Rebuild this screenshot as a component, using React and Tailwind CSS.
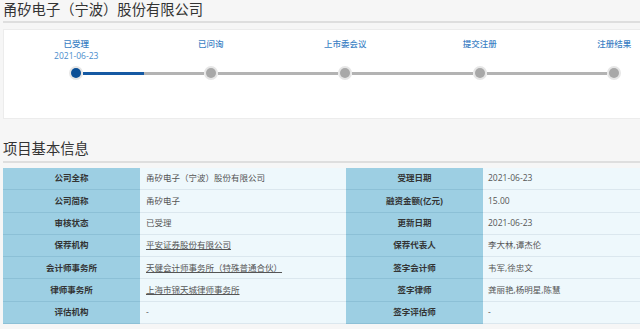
import React from 'react';

const steps = [
  { name: '已受理', date: '2021-06-23', done: true },
  { name: '已问询' },
  { name: '上市委会议' },
  { name: '提交注册' },
  { name: '注册结果' },
];

const rows = [
  ['公司全称', '甬矽电子（宁波）股份有限公司', '受理日期', '2021-06-23'],
  ['公司简称', '甬矽电子', '融资金额(亿元)', '15.00'],
  ['审核状态', '已受理', '更新日期', '2021-06-23'],
  ['保荐机构', '平安证券股份有限公司', '保荐代表人', '李大林,谭杰伦', true],
  ['会计师事务所', '天健会计师事务所（特殊普通合伙）', '签字会计师', '韦军,徐忠文', true],
  ['律师事务所', '上海市锦天城律师事务所', '签字律师', '龚丽艳,杨明星,陈慧', true],
  ['评估机构', '-', '签字评估师', '-'],
];

function Step({ step, index, last }) {
  return (
    <div className="w-[134.5px] shrink-0 flex flex-col items-center">
      <div className="h-[16px] flex items-end text-[8.5px] leading-none font-medium text-[#3b7fc4] whitespace-nowrap">
        {step.name}
      </div>
      <div className="mt-[2px] h-[12px] flex items-center text-[8.5px] leading-none text-[#4a8ccc]">
        {step.date || ''}
      </div>
      <div className="mt-[4px] w-full flex items-center h-[14px]">
        <div className={`flex-1 h-[3px] ${index === 0 ? 'bg-transparent' : 'bg-[#b3b3b3]'}`} />
        <div className="w-[14px] h-[14px] rounded-full bg-[#e6e6e6] flex items-center justify-center shrink-0">
          <div className={`w-[10px] h-[10px] rounded-full ${step.done ? 'bg-[#0b4f96]' : 'bg-[#a8a8a8]'}`} />
        </div>
        <div className={`flex-1 h-[3px] ${last ? 'bg-transparent' : index === 0 ? 'bg-[#1559a3]' : 'bg-[#b3b3b3]'}`} />
      </div>
    </div>
  );
}

export default function App() {
  return (
    <div
      className="w-[640px] h-[329px] overflow-hidden bg-[#f6f6f6] pl-[3px]"
      style={{ fontFamily: '"Open Sans", "Noto Sans CJK SC", sans-serif' }}
    >
      {/* Company title */}
      <div className="h-[23px] border-b-2 border-[#dedede] flex items-start pt-[1px]">
        <h1 className="text-[14.3px] leading-[18px] text-[#333] font-normal whitespace-nowrap">
          甬矽电子（宁波）股份有限公司
        </h1>
      </div>

      {/* Progress card */}
      <div className="mt-[6px] h-[90px] bg-white border border-[#ececec] border-r-0 pl-[5px] pt-[2px] flex">
        {steps.map((s, i) => (
          <Step key={s.name} step={s} index={i} last={i === steps.length - 1} />
        ))}
      </div>

      {/* Section title */}
      <div className="mt-[21px] h-[23px] border-b-2 border-[#dedede] flex items-start">
        <h2 className="text-[14.3px] leading-[18px] text-[#333] font-normal">项目基本信息</h2>
      </div>

      {/* Info table */}
      <div className="mt-[5px] grid grid-cols-[137px_206px_137px_1fr] text-[8.5px] leading-none">
        {rows.map(([l1, v1, l2, v2, link]) => (
          <React.Fragment key={l1}>
            <div className="h-[22.3px] bg-[#9dcfe3] border-b border-[#8cc0d6] flex items-center justify-center font-bold text-[#333]">
              {l1}
            </div>
            <div className="h-[22.3px] bg-[#eef8fc] border-b border-[#dbe7ee] flex items-center pl-[6px] text-[#555] whitespace-nowrap">
              <span className={link ? 'underline' : ''}>{v1}</span>
            </div>
            <div className="h-[22.3px] bg-[#9dcfe3] border-b border-[#8cc0d6] flex items-center justify-center font-bold text-[#333]">
              {l2}
            </div>
            <div className="h-[22.3px] bg-[#eef8fc] border-b border-[#dbe7ee] flex items-center pl-[5px] text-[#555] whitespace-nowrap">
              {v2}
            </div>
          </React.Fragment>
        ))}
      </div>
    </div>
  );
}
